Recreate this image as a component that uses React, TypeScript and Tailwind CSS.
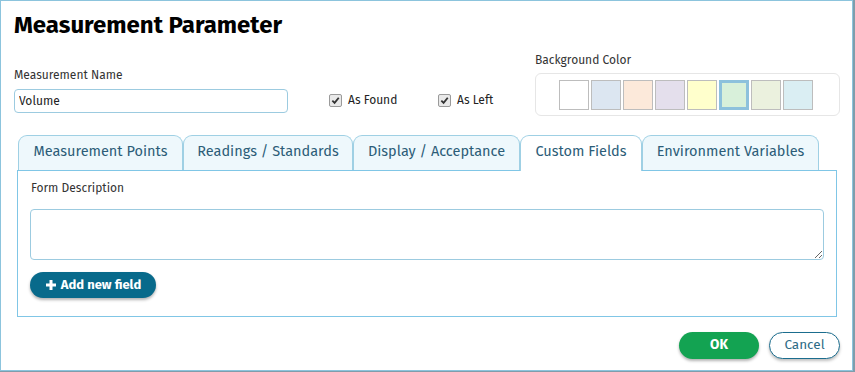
import React, { useState } from 'react';

const font = { fontFamily: '"Fira Sans", "Open Sans", "Noto Sans", sans-serif' };

const swatches = ['#ffffff', '#dce6f1', '#fce9da', '#e4dfec', '#ffffcc', '#d8f0da', '#ebf1de', '#daeef3'];

const tabs = [
  { label: 'Measurement Points', w: 'w-[165px]' },
  { label: 'Readings / Standards', w: 'w-[170px]' },
  { label: 'Display / Acceptance', w: 'w-[167px]' },
  { label: 'Custom Fields', w: 'w-[122px]' },
  { label: 'Environment Variables', w: 'w-[177px]' },
];

function Check({ label }: { label: string }) {
  return (
    <div className="flex items-center gap-[6px]">
      <span className="flex h-[13px] w-[13px] items-center justify-center rounded-[2px] border border-[#9a9a9a] bg-[#e9e9e9]">
        <svg width="9" height="9" viewBox="0 0 10 10">
          <path d="M1.5 5.2 L4 7.7 L8.6 2" fill="none" stroke="#333" strokeWidth="2" />
        </svg>
      </span>
      <span className="text-[12px] text-[#222]">{label}</span>
    </div>
  );
}

export default function App() {
  const [active, setActive] = useState(3);
  const [selected, setSelected] = useState(5);

  return (
    <div className="h-[372px] w-[855px] bg-[#7f9dab]" style={font}>
      <div className="flex h-[371px] w-[853px] flex-col border border-[#8cc4dd] bg-white">
        <h1 className="pl-[13px] pt-[8px] text-[24px] font-bold leading-[32px] text-black">
          Measurement Parameter
        </h1>

        <div className="flex h-[74px] pl-[13px]">
          <div className="w-[274px] pt-[26px]">
            <div className="text-[12px] leading-[16px] text-[#333]">Measurement Name</div>
            <input
              defaultValue="Volume"
              className="mt-[6px] block h-[24px] w-full rounded-[4px] border border-[#9ccbe0] px-[4px] text-[12px] text-[#222] outline-none"
            />
          </div>
          <div className="flex w-[247px] items-start pl-[41px] pt-[47px]">
            <div className="flex h-[24px] w-[109px] items-center">
              <Check label="As Found" />
            </div>
            <div className="flex h-[24px] items-center">
              <Check label="As Left" />
            </div>
          </div>
          <div className="w-[305px] pt-[11px]">
            <div className="text-[12px] leading-[16px] text-[#333]">Background Color</div>
            <div className="mt-[5px] flex h-[43px] items-center justify-center gap-[2px] rounded-[6px] border border-[#e6e6e6] pr-[3px]">
              {swatches.map((c, i) => (
                <button
                  key={c}
                  onClick={() => setSelected(i)}
                  className={
                    i === selected
                      ? 'h-[30px] w-[30px] border-[3px] border-[#8dc1dc]'
                      : 'h-[30px] w-[30px] border border-[#bdbdbd]'
                  }
                  style={{ backgroundColor: c }}
                />
              ))}
            </div>
          </div>
        </div>

        <div className="ml-[17px] mt-[20px] flex h-[35px] items-end">
          {tabs.map((t, i) => (
            <button
              key={t.label}
              onClick={() => setActive(i)}
              className={
                i === active
                  ? `${t.w} relative z-10 -mb-px flex h-[36px] items-center justify-center rounded-t-[9px] border border-b-0 border-[#9fd0e4] bg-white pb-[3px] text-[14.5px] text-[#2c5d78]`
                  : `${t.w} flex h-[35px] items-center justify-center rounded-t-[9px] border border-b-0 border-[#9fd0e4] bg-[#eef8fc] pb-[2px] text-[14.5px] text-[#2c5d78]`
              }
            >
              {t.label}
            </button>
          ))}
        </div>

        <div className="ml-[16px] h-[147px] w-[820px] border border-[#80c6e6] pl-[12px] pt-[9px]">
          <div className="pl-[1px] text-[12px] leading-[16px] text-[#333]">Form Description</div>
          <textarea className="mt-[13px] block h-[51px] w-[794px] rounded-[4px] border border-[#9ccbe0] outline-none" />
          <button className="mt-[12px] flex h-[26px] w-[126px] items-center justify-center gap-[4px] rounded-full bg-[#086a8b] text-[13px] font-bold text-white shadow-[0_2px_3px_rgba(0,0,0,0.3)]">
            <svg width="12" height="12" viewBox="0 0 12 12">
              <path d="M6 1 V11 M1 6 H11" stroke="#fff" strokeWidth="3" />
            </svg>
            Add new field
          </button>
        </div>

        <div className="mt-[15px] flex justify-end gap-[10px] pr-[12px]">
          <button className="h-[27px] w-[80px] rounded-full bg-[#13a352] text-[13.5px] font-bold text-white shadow-[0_2px_3px_rgba(0,0,0,0.3)]">
            OK
          </button>
          <button className="h-[27px] w-[71px] rounded-full border border-[#1b6d8e] bg-white text-[13.5px] text-[#2d6b86] shadow-[0_2px_3px_rgba(0,0,0,0.25)]">
            Cancel
          </button>
        </div>
      </div>
    </div>
  );
}
